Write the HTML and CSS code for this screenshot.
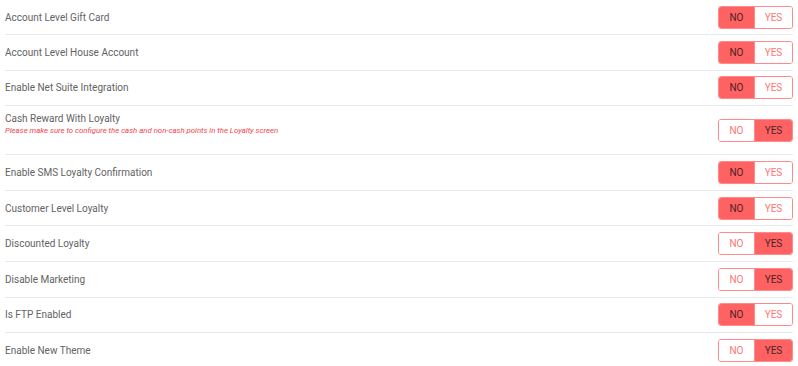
FILE: index.html
```html
<!DOCTYPE html>
<html lang="en">
<head>
    <meta charset="UTF-8">
    <title>Settings</title>
    <link rel="stylesheet" href="styles.css">
</head>
<body>
    <div class="settings">
        <div class="setting-row">
            <div class="label">Account Level Gift Card</div>
            <div class="toggle"><span class="opt active">NO</span><span class="opt">YES</span></div>
        </div>
        <div class="setting-row">
            <div class="label">Account Level House Account</div>
            <div class="toggle"><span class="opt active">NO</span><span class="opt">YES</span></div>
        </div>
        <div class="setting-row">
            <div class="label">Enable Net Suite Integration</div>
            <div class="toggle"><span class="opt active">NO</span><span class="opt">YES</span></div>
        </div>
        <div class="setting-row tall">
            <div class="label">
                Cash Reward With Loyalty
                <div class="note">Please make sure to configure the cash and non-cash points in the Loyalty screen</div>
            </div>
            <div class="toggle"><span class="opt">NO</span><span class="opt active">YES</span></div>
        </div>
        <div class="setting-row">
            <div class="label">Enable SMS Loyalty Confirmation</div>
            <div class="toggle"><span class="opt active">NO</span><span class="opt">YES</span></div>
        </div>
        <div class="setting-row">
            <div class="label">Customer Level Loyalty</div>
            <div class="toggle"><span class="opt active">NO</span><span class="opt">YES</span></div>
        </div>
        <div class="setting-row">
            <div class="label">Discounted Loyalty</div>
            <div class="toggle"><span class="opt">NO</span><span class="opt active">YES</span></div>
        </div>
        <div class="setting-row">
            <div class="label">Disable Marketing</div>
            <div class="toggle"><span class="opt">NO</span><span class="opt active">YES</span></div>
        </div>
        <div class="setting-row">
            <div class="label">Is FTP Enabled</div>
            <div class="toggle"><span class="opt active">NO</span><span class="opt">YES</span></div>
        </div>
        <div class="setting-row last">
            <div class="label">Enable New Theme</div>
            <div class="toggle"><span class="opt">NO</span><span class="opt active">YES</span></div>
        </div>
    </div>
</body>
</html>
```

FILE: styles.css
```css
body {
    margin: 0;
    background-color: #fff;
    font-family: Roboto, "Liberation Sans", Arial, sans-serif;
}

.settings {
    margin: 0 5px 0 5px;
}

.setting-row {
    display: flex;
    justify-content: space-between;
    align-items: center;
    height: 34.6px;
    border-bottom: 1px solid #e6e9ee;
}

.setting-row:first-child {
    height: 34px;
}

.setting-row.tall {
    height: 48px;
    align-items: flex-start;
}

.setting-row.tall .label {
    padding-top: 7px;
}

.setting-row.tall .toggle {
    align-self: center;
}

.setting-row.last {
    border-bottom: none;
}

.label {
    font-size: 10px;
    color: #636363;
}

.note {
    margin-top: 2px;
    font-size: 7.8px;
    font-style: italic;
    color: #f2434c;
}

/* toggle */
.toggle {
    display: flex;
    height: 21px;
    border: 1px solid #ff8a8a;
    border-radius: 3px;
    overflow: hidden;
}

.opt {
    display: flex;
    justify-content: center;
    align-items: center;
    font-size: 10px;
    color: #ff7474;
    background-color: #fff;
}

.opt:first-child {
    width: 35px;
    border-right: 1px solid #ff8a8a;
}

.opt:last-child {
    width: 37px;
}

.opt.active {
    background-color: #ff6262;
    color: #4a2424;
}
```
